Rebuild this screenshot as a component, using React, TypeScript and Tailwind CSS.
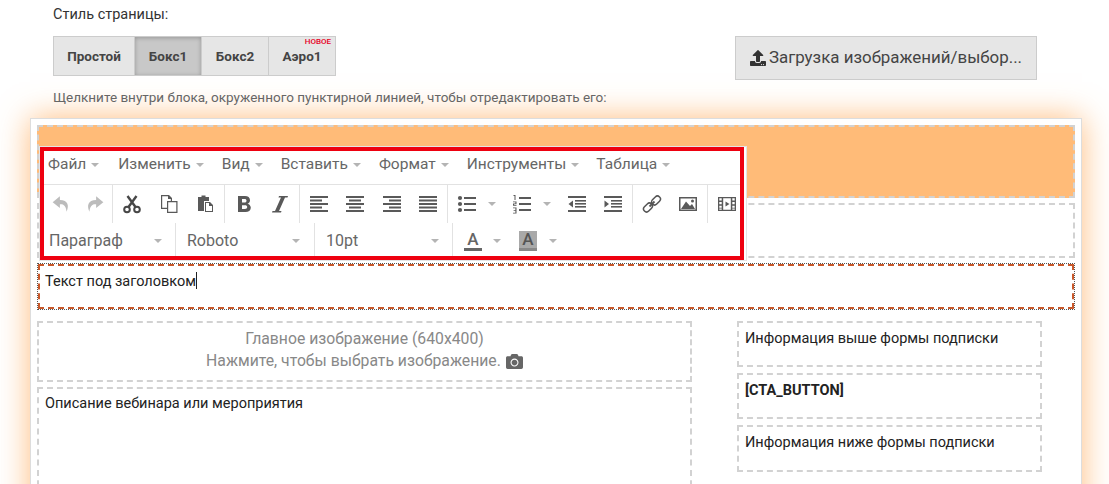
import { ReactNode } from "react";
import { FaCamera, FaUpload } from "react-icons/fa";

const font = { fontFamily: "Roboto, 'Noto Sans', sans-serif" };

const Caret = () => (
  <span className="inline-block w-0 h-0 border-x-[4px] border-x-transparent border-t-[4px] border-t-[#b4b4b4]" />
);

const Ico = ({ children, w = 20, h = 20 }: { children: ReactNode; w?: number; h?: number }) => (
  <svg width={w} height={h} viewBox="0 0 20 20" fill="#595959">
    {children}
  </svg>
);

const lines = (rows: [number, number][]) =>
  rows.map(([x, w], i) => <rect key={i} x={x} y={2 + i * 3.5} width={w} height={2} />);

const UndoIcon = ({ flip = false }: { flip?: boolean }) => (
  <svg width="20" height="20" viewBox="0 0 18 18" fill="#bcbcbc" style={flip ? { transform: "scaleX(-1)" } : undefined}>
    <path d="M8 2 L1.5 7.5 L8 12.5 V9.2 C11.5 9 13.5 10.5 14 16 C16.5 10.5 15.5 5.500 8 5.400 Z" />
  </svg>
);

const CutIcon = () => (
  <svg width="20" height="20" viewBox="0 0 20 20" fill="none" stroke="#474747">
    <circle cx="5" cy="15.500" r="2.800" strokeWidth="2" />
    <circle cx="15" cy="15.500" r="2.800" strokeWidth="2" />
    <path d="M6.500 13 L14.500 2 M13.500 13 L5.500 2" strokeWidth="2.400" />
  </svg>
);

const CopyIcon = () => (
  <Ico>
    <path d="M2 1h8l3 3v3h5.500v12H8v-4H2z M3.200 2.200v11.600H8V7h3.800V5H9V2.200z M9.200 8.200v9.600h8.100V8.200z" fillRule="evenodd" />
  </Ico>
);

const PasteIcon = () => (
  <Ico>
    <path d="M3 3h3.500V1.500h4V3H14v4H9v10H3z" />
    <path d="M10 8h5l3 3v7h-8z M11 9v8h6v-5h-3V9z" fillRule="evenodd" />
  </Ico>
);

const BulletIcon = () => (
  <Ico>
    <circle cx="3" cy="4" r="2.100" />
    <circle cx="3" cy="10" r="2.100" />
    <circle cx="3" cy="16" r="2.100" />
    <rect x="7" y="3" width="12" height="2" />
    <rect x="7" y="9" width="12" height="2" />
    <rect x="7" y="15" width="12" height="2" />
  </Ico>
);

const NumberIcon = () => (
  <Ico>
    <path d="M1.500 1h2v5h-1V2h-1z M1 7.500h3.500v2.700H2.200v.8h2.300v.8H1V9.600h2.400V8.300H1z M1 13.500h3.500v6H1v-.8h2.400v-1.800H1.600v-.7h1.800v-1.900H1z" />
    <rect x="7" y="3" width="12" height="2" />
    <rect x="7" y="9" width="12" height="2" />
    <rect x="7" y="15" width="12" height="2" />
  </Ico>
);

const IndentIcon = ({ out = false }: { out?: boolean }) => (
  <Ico>
    <rect x="1" y="2" width="18" height="2" />
    <rect x="8" y="6" width="11" height="1.600" />
    <rect x="8" y="9" width="11" height="1.600" />
    <rect x="8" y="12" width="11" height="1.600" />
    <rect x="1" y="16" width="18" height="2" />
    <path d={out ? "M6 6.500v7L1.500 10z" : "M1.500 6.500v7L6 10z"} />
  </Ico>
);

const LinkIcon = () => (
  <svg width="20" height="20" viewBox="0 0 20 20" fill="none" stroke="#555" strokeWidth="1.500">
    <rect x="1" y="10.500" width="10" height="6" rx="3" transform="rotate(-45 6 13.500)" />
    <rect x="9" y="3.500" width="10" height="6" rx="3" transform="rotate(-45 14 6.500)" />
    <path d="M7.500 12.500 L12.500 7.500" strokeWidth="1.800" />
  </svg>
);

const ImageIcon = () => (
  <Ico>
    <path d="M1 3h18v14H1z M2.500 4.500v11h15v-11z" fillRule="evenodd" />
    <path d="M3 15 L8 7.500 L12 12 L14 10 L17 15z" />
    <circle cx="14.500" cy="7" r="1.500" />
  </Ico>
);

const FilmIcon = () => (
  <Ico>
    <path
      d="M1 3h18v14H1z M2.300 4.300v2.200h2.400V4.300z M2.300 8v2.200h2.400V8z M2.300 11.700v2h2.400v-2z M2.300 14.600v1.200h2.400v-1.200z M15.300 4.300v2.200h2.400V4.300z M15.300 8v2.200h2.400V8z M15.300 11.700v2h2.400v-2z M15.300 14.600v1.200h2.400v-1.200z M6.200 4.300v11.500h7.600V4.300z"
      fillRule="evenodd"
    />
    <path d="M8.500 7.500v5l4-2.500z" />
  </Ico>
);

const Btn = ({ children }: { children: ReactNode }) => (
  <div className="w-[36.5px] h-full flex items-center justify-center">{children}</div>
);

const Split = ({ children }: { children: ReactNode }) => (
  <div className="w-[55px] h-full flex items-center pl-[8px] gap-[11px]">
    {children}
    <Caret />
  </div>
);

const Group = ({ children, first = false }: { children: ReactNode; first?: boolean }) => (
  <div className={`flex h-full ${first ? "" : "border-l border-[#e2e2e2] pl-px"}`}>{children}</div>
);

const menu = [
  { label: "Файл", gap: "mr-[19px]" },
  { label: "Изменить", gap: "mr-[18px]" },
  { label: "Вид", gap: "mr-[18px]" },
  { label: "Вставить", gap: "mr-[18px]" },
  { label: "Формат", gap: "mr-[18px]" },
  { label: "Инструменты", gap: "mr-[17px]" },
  { label: "Таблица", gap: "" },
];

const Toolbar = () => (
  <div className="absolute left-[39px] top-[146px] w-[708px] h-[115px] bg-white border-[1px] border-[#e4e4e4]">
    <div className="h-full border-[4px] border-[#ee0010] mr-[2px] mb-[1px] flex flex-col">
      {/* menu */}
      <div className="h-[34px] border-b border-[#e2e2e2] flex items-center pl-[4px] pb-[5px] text-[15.5px] text-[#666]">
        {menu.map((m) => (
          <div key={m.label} className={`flex items-center gap-[5px] ${m.gap}`}>
            <span>{m.label}</span>
            <Caret />
          </div>
        ))}
      </div>
      {/* buttons */}
      <div className="h-[38px] flex">
        <Group first>
          <div className="w-[68px] flex h-full">
            <div className="w-[34px] flex items-center justify-center">
              <UndoIcon />
            </div>
            <div className="w-[34px] flex items-center justify-center">
              <UndoIcon flip />
            </div>
          </div>
        </Group>
        <Group>
          <Btn>
            <CutIcon />
          </Btn>
          <Btn>
            <CopyIcon />
          </Btn>
          <Btn>
            <PasteIcon />
          </Btn>
        </Group>
        <Group>
          <Btn>
            <Ico>
              <path
                d="M4 2h7c3 0 5 1.500 5 4.200 0 1.800-1 3-2.500 3.500 2 .5 3.300 2 3.300 4.100 0 2.800-2.200 4.200-5.300 4.200H4z M8 5v3.500h2.500c1.300 0 2-.7 2-1.800S11.800 5 10.500 5z M8 11.300V15h3c1.300 0 2.200-.7 2.200-1.900s-.9-1.800-2.200-1.800z"
                fillRule="evenodd"
              />
            </Ico>
          </Btn>
          <Btn>
            <Ico>
              <path d="M9 2h9l-.5 1.500H15L9 17h2.500l-.5 1.500H2l.5-1.500H5L11 3.500H8.500z" />
            </Ico>
          </Btn>
        </Group>
        <Group>
          <Btn>
            <Ico>{lines([[1, 18], [1, 12], [1, 18], [1, 12], [1, 18]])}</Ico>
          </Btn>
          <Btn>
            <Ico>{lines([[1, 18], [4, 12], [1, 18], [4, 12], [1, 18]])}</Ico>
          </Btn>
          <Btn>
            <Ico>{lines([[1, 18], [7, 12], [1, 18], [7, 12], [1, 18]])}</Ico>
          </Btn>
          <Btn>
            <Ico>{lines([[1, 18], [1, 18], [1, 18], [1, 18], [1, 18]])}</Ico>
          </Btn>
        </Group>
        <Group>
          <Split>
            <BulletIcon />
          </Split>
          <Split>
            <NumberIcon />
          </Split>
          <Btn>
            <IndentIcon out />
          </Btn>
          <Btn>
            <IndentIcon />
          </Btn>
        </Group>
        <Group>
          <Btn>
            <LinkIcon />
          </Btn>
          <Btn>
            <ImageIcon />
          </Btn>
        </Group>
        <Group>
          <Btn>
            <FilmIcon />
          </Btn>
        </Group>
      </div>
      {/* selects */}
      <div className="flex-1 flex items-stretch text-[16px] text-[#666] min-h-0">
        <div className="w-[132px] flex items-center justify-between pl-[5px] pr-[13px] pt-[3px] border-r border-[#e2e2e2]">
          <span>Параграф</span>
          <Caret />
        </div>
        <div className="w-[139px] flex items-center justify-between pl-[11px] pr-[14px] pt-[3px] border-r border-[#e2e2e2]">
          <span>Roboto</span>
          <Caret />
        </div>
        <div className="w-[138px] flex items-center justify-between pl-[11px] pr-[13px] pt-[3px] border-r border-[#e2e2e2]">
          <span>10pt</span>
          <Caret />
        </div>
        <div className="flex items-center pl-[11px] pt-[3px]">
          <span className="w-[18px] h-[20px] border-b-[3px] border-[#666] text-[17px] leading-[17px] font-medium text-center">
            A
          </span>
          <span className="ml-[11px] flex">
            <Caret />
          </span>
          <span className="ml-[18px] w-[18px] h-[20px] bg-[#a9a9a9] border-b-[3px] border-[#888] text-[17px] leading-[17px] font-medium text-center text-[#555]">
            A
          </span>
          <span className="ml-[12px] flex">
            <Caret />
          </span>
        </div>
      </div>
    </div>
  </div>
);

const StyleTab = ({ label, active = false, badge = false, w }: { label: string; active?: boolean; badge?: boolean; w: string }) => (
  <div
    className={`${w} relative flex items-center justify-center font-bold text-[13.5px] text-[#444] border border-[#ccc] -ml-px first:ml-0 ${
      active ? "bg-[#c8c8c8] shadow-[inset_0_1px_4px_rgba(0,0,0,0.25)]" : "bg-[#e6e6e6]"
    }`}
  >
    {label}
    {badge && (
      <span className="absolute right-[4px] top-0 text-[8px] leading-[9px] font-medium text-[#e6001e]">НОВОЕ</span>
    )}
  </div>
);

const Dashed = ({ className, children }: { className: string; children?: ReactNode }) => (
  <div className={`border-2 border-dashed border-[#d2d2d2] ${className}`}>{children}</div>
);

export default function App() {
  return (
    <div className="relative w-[1109px] h-[484px] overflow-hidden bg-white" style={font}>
      <div className="h-[118px] pl-[53px] pr-[72px] pt-[6px] flex flex-col">
        <p className="text-[14.5px] leading-[17px] text-[#333]">Стиль страницы:</p>
        <div className="flex justify-between mt-[13px] h-[44px]">
          <div className="flex h-[40px]">
            <StyleTab w="w-[82px]" label="Простой" />
            <StyleTab w="w-[68px]" label="Бокс1" active />
            <StyleTab w="w-[68px]" label="Бокс2" />
            <StyleTab w="w-[68px]" label="Аэро1" badge />
          </div>
          <div className="w-[302px] h-[44px] flex items-center justify-center gap-[3px] bg-[#e6e6e6] border border-[#ccc] text-[16.9px] text-[#444]">
            <FaUpload size={16} color="#333" />
            Загрузка изображений/выбор...
          </div>
        </div>
        <p className="mt-[9px] text-[13.5px] leading-[16px] text-[#666]">
          Щелкните внутри блока, окруженного пунктирной линией, чтобы отредактировать его:
        </p>
      </div>

      <div className="ml-[30px] w-[1052px] h-[400px] bg-white border border-[#ddd] shadow-[0_0_30px_rgba(255,160,70,0.7)] pt-[6px] pl-[6px] pr-[6px]">
        <Dashed className="h-[73px] bg-[#ffbb78]" />
        <Dashed className="h-[55px] mt-[5px]" />
        <div className="h-[45px] mt-[6px] mb-[1px] mx-px border-2 border-dashed border-[#c9582a] outline-1 outline-dotted outline-[#555] pl-[5px] pt-[6px] text-[14.5px] leading-[20px] text-[#222]">
          Текст под заголовком<span className="inline-block w-px h-[17px] bg-[#222] align-[-3px]" />
        </div>
        <div className="flex mt-[12px]">
          <div className="w-[655px]">
            <Dashed className="h-[61px] flex flex-col items-center text-[15.75px] leading-[22px] text-[#888] pt-[5px]">
              <span>Главное изображение (640x400)</span>
              <span className="flex items-center gap-[5px]">
                Нажмите, чтобы выбрать изображение.
                <FaCamera size={17} color="#666" />
              </span>
            </Dashed>
            <Dashed className="h-[120px] mt-[5px] pl-[6px] pt-[5px] text-[14.5px] leading-[20px] text-[#222]">
              Описание вебинара или мероприятия
            </Dashed>
          </div>
          <div className="w-[305px] ml-[45px] flex flex-col gap-[6px] text-[14.5px] leading-[20px] text-[#222]">
            <Dashed className="h-[46px] pl-[6px] pt-[6px]">Информация выше формы подписки</Dashed>
            <Dashed className="h-[46px] pl-[6px] pt-[6px] font-bold">[CTA_BUTTON]</Dashed>
            <Dashed className="h-[47px] pl-[6px] pt-[6px]">Информация ниже формы подписки</Dashed>
          </div>
        </div>
      </div>

      <Toolbar />
    </div>
  );
}
